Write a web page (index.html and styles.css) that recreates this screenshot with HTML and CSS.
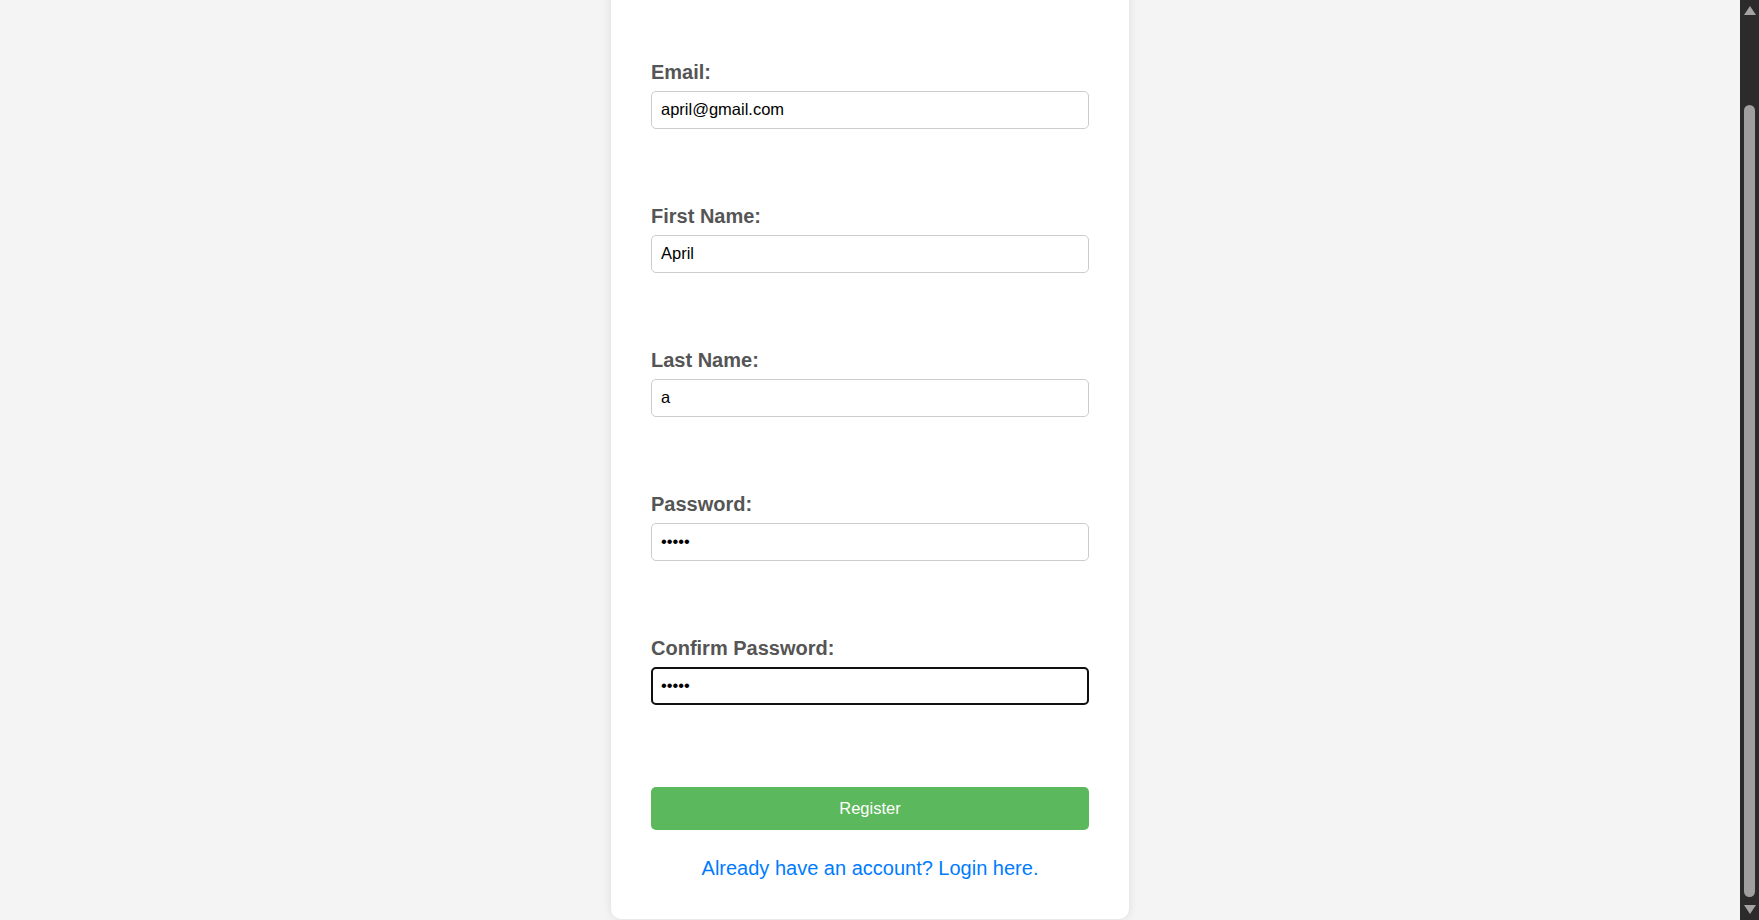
FILE: index.html
```html
<!DOCTYPE html>
<html lang="en">
<head>
<meta charset="utf-8">
<title>Register</title>
<link rel="stylesheet" href="styles.css">
</head>
<body>
<div class="page">
  <main class="main">
    <div class="card">
      <form class="form">
        <div class="group">
          <label class="label" for="email">Email:</label>
          <input class="input" id="email" type="email" value="april@gmail.com">
        </div>
        <div class="group">
          <label class="label" for="first">First Name:</label>
          <input class="input" id="first" type="text" value="April">
        </div>
        <div class="group">
          <label class="label" for="last">Last Name:</label>
          <input class="input" id="last" type="text" value="a">
        </div>
        <div class="group">
          <label class="label" for="pw">Password:</label>
          <input class="input" id="pw" type="password" value="aaaaa">
        </div>
        <div class="group group-last">
          <label class="label" for="pw2">Confirm Password:</label>
          <input class="input input-focus" id="pw2" type="password" value="aaaaa">
        </div>
        <button class="btn" type="button">Register</button>
      </form>
      <p class="alt"><a class="alt-link" href="#">Already have an account? Login here.</a></p>
    </div>
  </main>
  <aside class="scrollbar">
    <div class="arrow arrow-up"></div>
    <div class="track"><div class="thumb"></div></div>
    <div class="arrow arrow-down"></div>
  </aside>
</div>
</body>
</html>
```

FILE: styles.css
```css
html, body {
  margin: 0;
  padding: 0;
  height: 100%;
  overflow: hidden;
}

body {
  background: #f4f4f4;
  font-family: "Liberation Sans", Arial, sans-serif;
}

.page {
  display: flex;
  height: 920px;
}

.main {
  flex: 1;
  display: flex;
  justify-content: center;
  align-items: flex-start;
  overflow: hidden;
}

.card {
  box-sizing: border-box;
  width: 518px;
  margin-top: -20px;
  padding: 81px 40px 39px;
  background: #fff;
  border-radius: 10px;
  box-shadow: 0 0 10px rgba(0, 0, 0, 0.1);
}

.form {
  display: flex;
  flex-direction: column;
}

.group {
  display: flex;
  flex-direction: column;
  margin-bottom: 76px;
}

.group-last {
  margin-bottom: 82px;
}

.label {
  display: block;
  font-size: 20px;
  line-height: 23px;
  font-weight: bold;
  color: #555555;
  margin-bottom: 7px;
}

.input {
  box-sizing: border-box;
  width: 100%;
  height: 38px;
  padding: 0 9px 2px;
  border: 1px solid #cccccc;
  border-radius: 5px;
  font-family: "Liberation Sans", Arial, sans-serif;
  font-size: 16.5px;
  color: #000;
  background: #fff;
  outline: none;
}

.input-focus {
  outline: 2px solid #101010;
  outline-offset: -2px;
}

.btn {
  box-sizing: border-box;
  width: 100%;
  height: 43px;
  border: none;
  border-radius: 5px;
  background: #5cb85c;
  color: #fff;
  font-family: "Liberation Sans", Arial, sans-serif;
  font-size: 16.5px;
  cursor: pointer;
}

.alt {
  margin: 27px 0 0;
  text-align: center;
  font-size: 20px;
  line-height: 23px;
}

.alt-link {
  color: #007bff;
  text-decoration: none;
}

.scrollbar {
  width: 19px;
  flex: none;
  background: #2b2b2b;
  display: flex;
  flex-direction: column;
  align-items: center;
}

.arrow {
  width: 0;
  height: 0;
  border-left: 6px solid transparent;
  border-right: 6px solid transparent;
  flex: none;
}

.arrow-up {
  margin-top: 6px;
  border-bottom: 9px solid #a3a3a3;
}

.arrow-down {
  margin-bottom: 6px;
  border-top: 9px solid #a3a3a3;
}

.track {
  flex: 1;
  width: 100%;
  display: flex;
  flex-direction: column;
  align-items: center;
  padding: 90px 0 8px;
  box-sizing: border-box;
}

.thumb {
  width: 11px;
  flex: 1;
  background: #9f9f9f;
  border-radius: 6px;
}
```
